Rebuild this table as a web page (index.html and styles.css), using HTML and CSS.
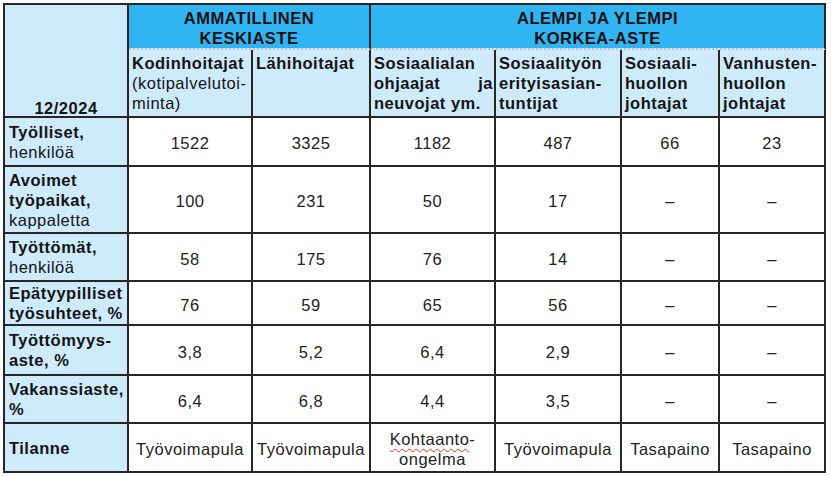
FILE: index.html
```html
<!DOCTYPE html>
<html lang="fi">
<head>
<meta charset="utf-8">
<title>Työmarkkinatilanne 12/2024</title>
<link rel="stylesheet" href="styles.css">
</head>
<body>
<div class="sheet">
<table class="grid">
  <colgroup>
    <col class="c1"><col class="c2"><col class="c3"><col class="c4"><col class="c5"><col class="c6"><col class="c7">
  </colgroup>
  <thead>
    <tr class="r-group">
      <th class="corner" rowspan="2">12/2024</th>
      <th class="group" colspan="2">AMMATILLINEN<br>KESKIASTE</th>
      <th class="group" colspan="4">ALEMPI JA YLEMPI<br>KORKEA-ASTE</th>
    </tr>
    <tr class="r-sub">
      <th class="sub">Kodinhoitajat<br><span class="reg">(kotipalvelutoi-<br>minta)</span></th>
      <th class="sub">Lähihoitajat</th>
      <th class="sub"><span class="line">Sosiaalialan</span><span class="line spread"><span>ohjaajat</span><span>ja</span></span><span class="line">neuvojat ym.</span></th>
      <th class="sub">Sosiaalityön<br>erityisasian-<br>tuntijat</th>
      <th class="sub">Sosiaali-<br>huollon<br>johtajat</th>
      <th class="sub">Vanhusten-<br>huollon<br>johtajat</th>
    </tr>
  </thead>
  <tbody>
    <tr class="r1">
      <th class="label">Työlliset,<br><span class="reg">henkilöä</span></th>
      <td>1522</td><td>3325</td><td>1182</td><td>487</td><td>66</td><td>23</td>
    </tr>
    <tr class="r2">
      <th class="label">Avoimet<br>työpaikat,<br><span class="reg">kappaletta</span></th>
      <td>100</td><td>231</td><td>50</td><td>17</td><td>–</td><td>–</td>
    </tr>
    <tr class="r3">
      <th class="label">Työttömät,<br><span class="reg">henkilöä</span></th>
      <td>58</td><td>175</td><td>76</td><td>14</td><td>–</td><td>–</td>
    </tr>
    <tr class="r4">
      <th class="label">Epätyypilliset<br>työsuhteet, %</th>
      <td>76</td><td>59</td><td>65</td><td>56</td><td>–</td><td>–</td>
    </tr>
    <tr class="r5">
      <th class="label">Työttömyys-<br>aste, %</th>
      <td>3,8</td><td>5,2</td><td>6,4</td><td>2,9</td><td>–</td><td>–</td>
    </tr>
    <tr class="r6">
      <th class="label">Vakanssiaste,<br>%</th>
      <td>6,4</td><td>6,8</td><td>4,4</td><td>3,5</td><td>–</td><td>–</td>
    </tr>
    <tr class="r7">
      <th class="label">Tilanne</th>
      <td>Työvoimapula</td><td>Työvoimapula</td><td><span class="spell">Kohtaanto</span>-<br>ongelma</td><td>Työvoimapula</td><td>Tasapaino</td><td>Tasapaino</td>
    </tr>
  </tbody>
</table>
</div>
</body>
</html>
```

FILE: styles.css
```css
* { box-sizing: border-box; }

html, body {
  margin: 0;
  padding: 0;
  background: #ffffff;
}

body {
  font-family: "Liberation Sans", Arial, sans-serif;
  font-size: 16.5px;
  letter-spacing: 0.5px;
  line-height: 20px;
  color: #1e1e1e;
}

.sheet {
  padding: 3px 0 0 3px;
}

.grid {
  border-collapse: separate;
  border-spacing: 0;
  table-layout: fixed;
  width: 823px;
  border-top: 2px solid #262626;
  border-left: 2px solid #262626;
  background: #cdebfb;
}

.grid th,
.grid td {
  border-right: 2px solid #262626;
  border-bottom: 2px solid #262626;
  padding: 0;
  font-weight: normal;
}

.c1 { width: 124px; }
.c2 { width: 124px; }
.c3 { width: 118px; }
.c4 { width: 125px; }
.c5 { width: 126px; }
.c6 { width: 98px; }
.c7 { width: 106px; }

.r-group { height: 45px; }
.r-sub { height: 68px; }
.r1 { height: 49px; }
.r2 { height: 67px; }
.r3 { height: 48px; }
.r4 { height: 44px; }
.r5 { height: 50px; }
.r6 { height: 48px; }
.r7 { height: 49px; }

.grid .corner {
  background: #cdebfb;
  font-weight: bold;
  text-align: center;
  vertical-align: bottom;
  line-height: 16px;
  color: #141414;
}

.grid .group {
  background: #31b4f2;
  background-clip: padding-box;
  border-bottom: 2px dotted #b9c6cf;
  font-weight: bold;
  text-align: center;
  vertical-align: bottom;
  color: #111111;
}

.grid .sub {
  background: #cdebfb;
  font-weight: bold;
  text-align: left;
  vertical-align: top;
  padding: 3px 1px 0 3px;
  color: #141414;
}

.line {
  display: block;
}

.spread {
  display: flex;
  justify-content: space-between;
}

.grid .label {
  background: #cdebfb;
  font-weight: bold;
  text-align: left;
  vertical-align: middle;
  padding: 0 2px 0 4px;
  color: #141414;
}

.grid .reg {
  font-weight: normal;
}

.grid td {
  background: #ffffff;
  text-align: center;
  vertical-align: middle;
  padding-top: 3px;
  color: #222222;
}

.spell {
  text-decoration: underline wavy #e0352b;
  text-decoration-thickness: 1px;
  text-underline-offset: 3px;
}
```
